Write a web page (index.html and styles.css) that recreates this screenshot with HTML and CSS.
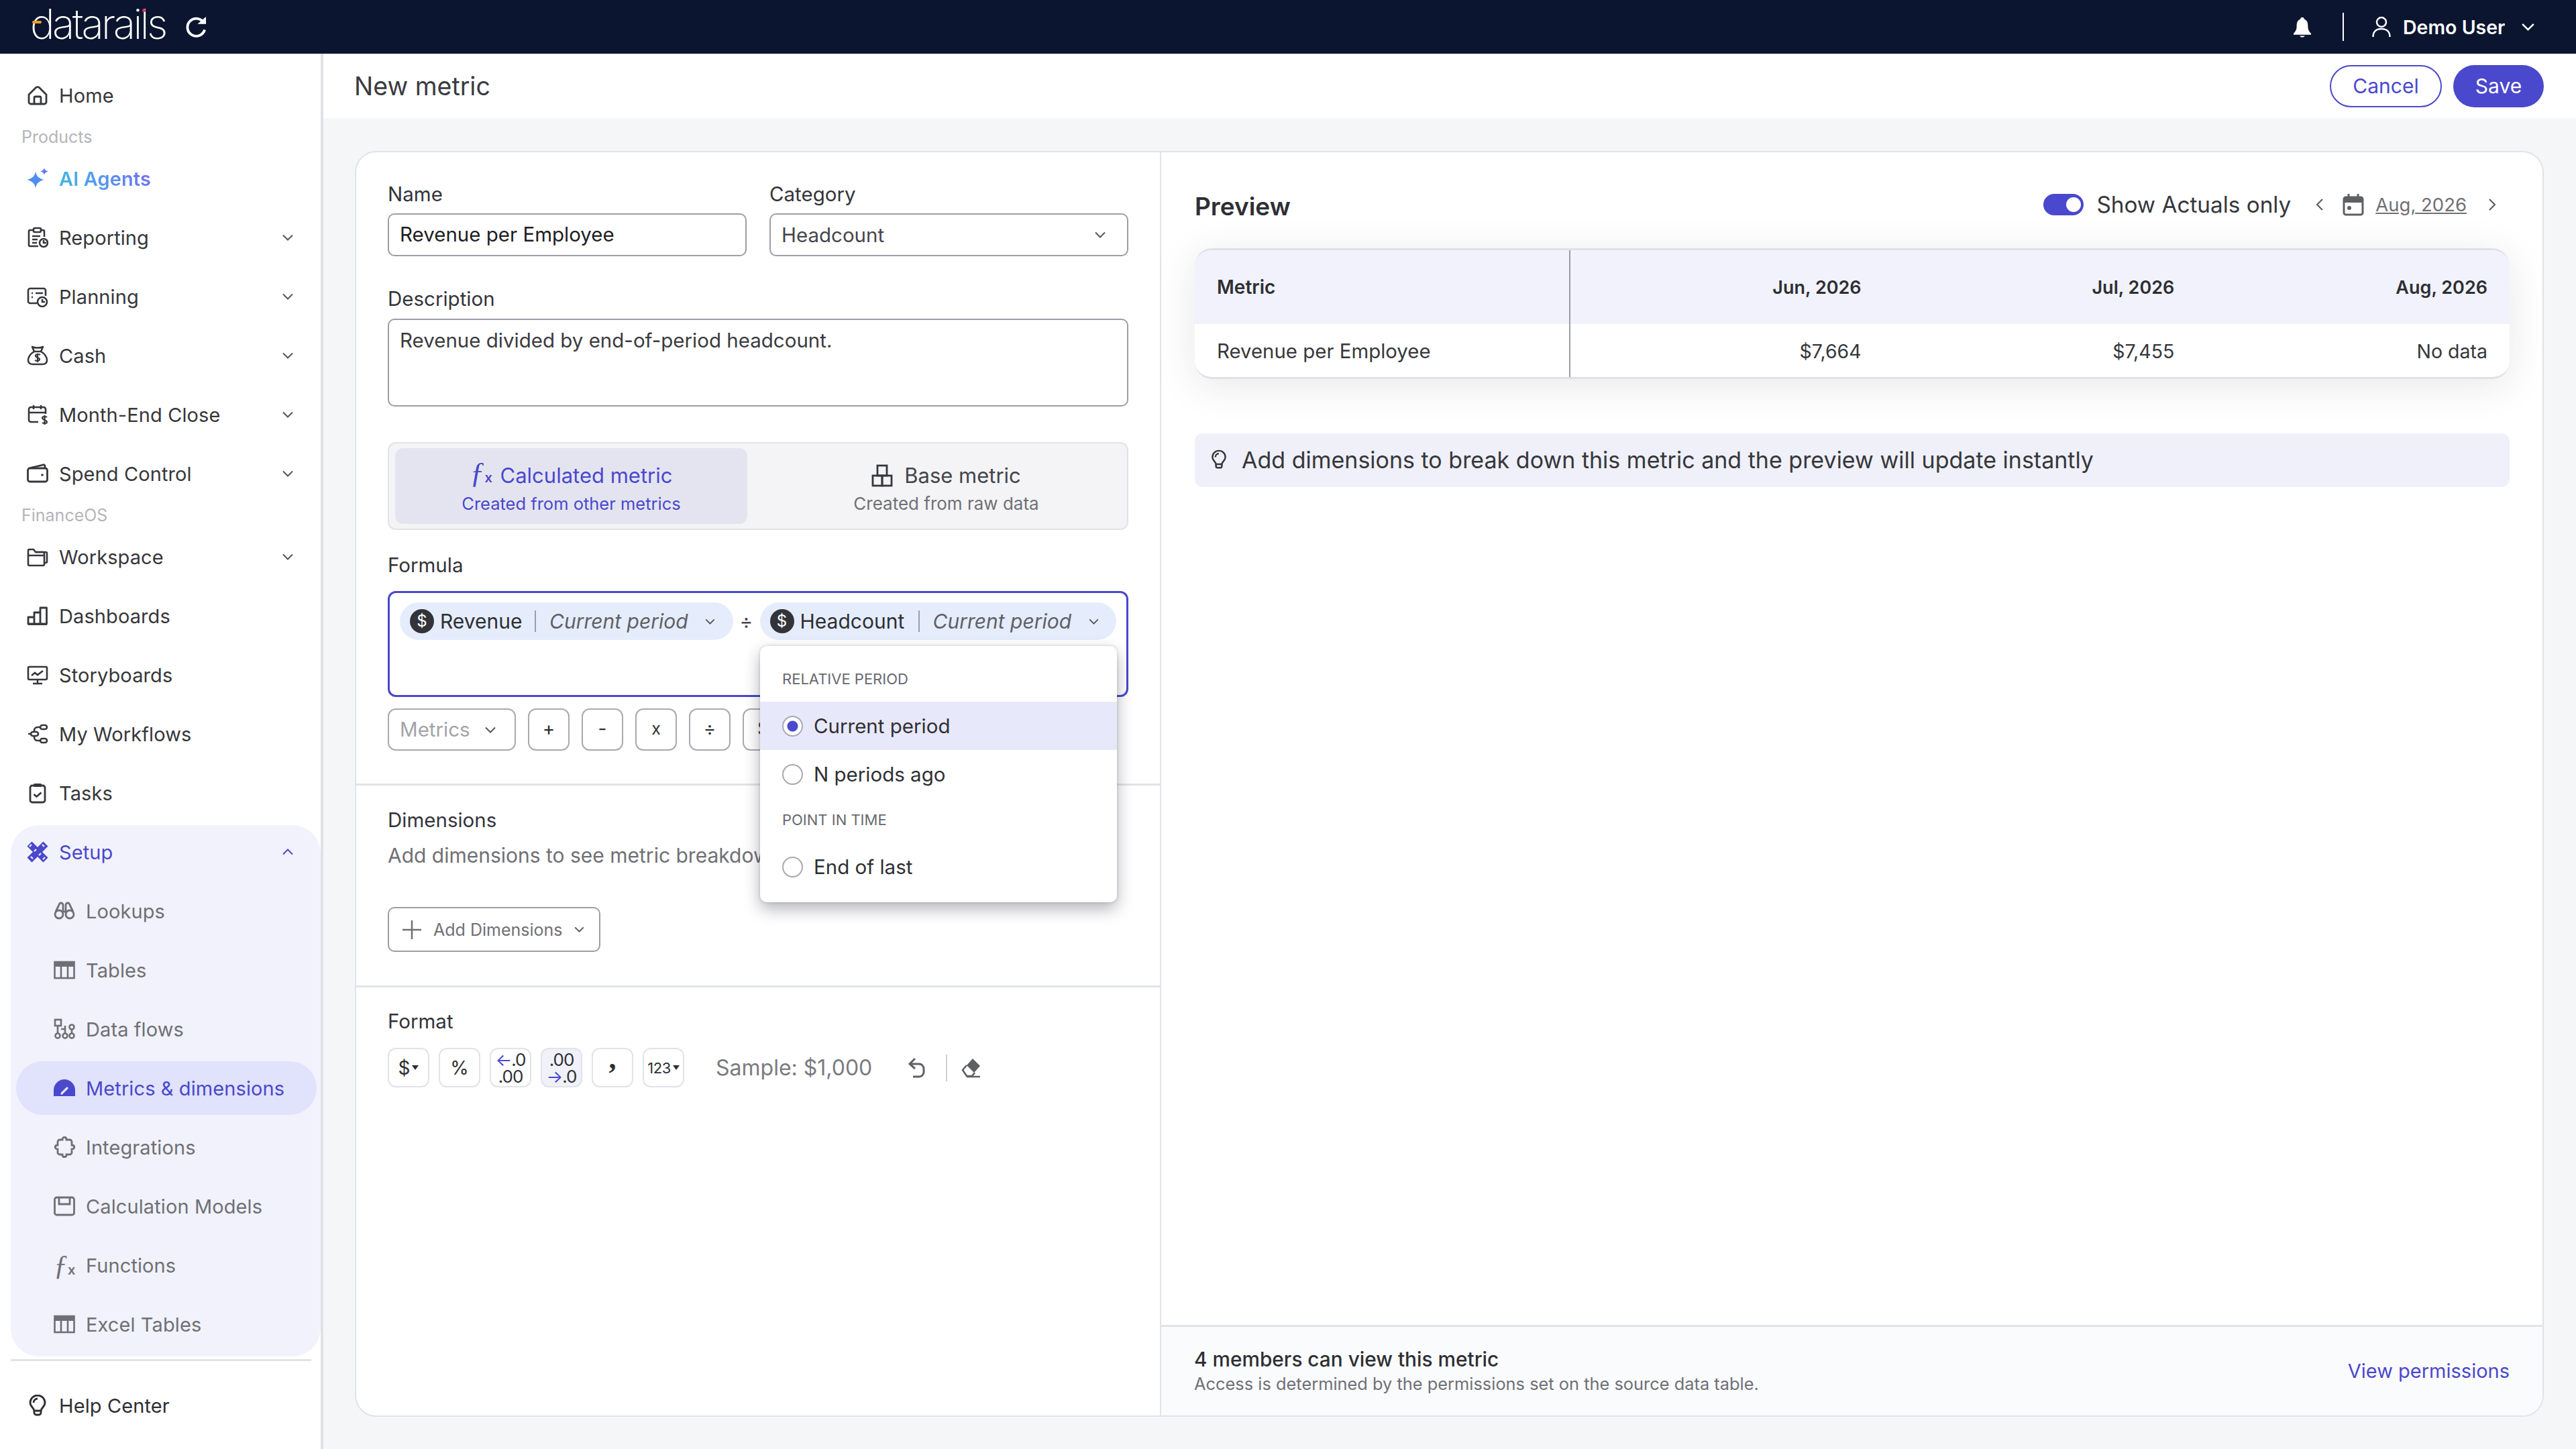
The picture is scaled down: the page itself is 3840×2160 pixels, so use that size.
FILE: index.html
```html
<!DOCTYPE html>
<html lang="en">
<head>
<meta charset="utf-8">
<title>New metric</title>
<link rel="stylesheet" href="styles.css">
</head>
<body>
<svg class="sprite" xmlns="http://www.w3.org/2000/svg">
  <defs>
    <symbol id="chev" viewBox="0 0 16 10"><path d="M1 1.5 8 8.5 15 1.5" fill="none" stroke="currentColor" stroke-width="2"/></symbol>
    <symbol id="i-home" viewBox="0 0 32 32"><path d="M3 15 13 5a4 4 0 0 1 6 0l10 10v11a3 3 0 0 1-3 3H6a3 3 0 0 1-3-3ZM11 29V20a2 2 0 0 1 2-2h6a2 2 0 0 1 2 2v9" fill="none" stroke="currentColor" stroke-width="2.8" stroke-linejoin="round"/></symbol>
    <symbol id="i-report" viewBox="0 0 32 32"><g fill="none" stroke="currentColor" stroke-width="2.6"><path d="M10 5H5a2 2 0 0 0-2 2v20a2 2 0 0 0 2 2h12M21 5h3a2 2 0 0 1 2 2v8"/><rect x="10" y="2" width="11" height="6" rx="2"/><path d="M8 14h12M8 19h8M8 24h7"/><circle cx="25" cy="24" r="6"/><path d="M25 20v4h4"/></g></symbol>
    <symbol id="i-plan" viewBox="0 0 32 32"><g fill="none" stroke="currentColor" stroke-width="2.6"><path d="M15 26H5a3 3 0 0 1-3-3V7a3 3 0 0 1 3-3h20a3 3 0 0 1 3 3v8"/><path d="M7 11h2M13 11h11M7 17h2"/><circle cx="23" cy="24" r="7"/><path d="M23 20v4h4"/></g></symbol>
    <symbol id="i-cash" viewBox="0 0 32 32"><g fill="none" stroke="currentColor" stroke-width="2.6" stroke-linejoin="round"><path d="M11 10 8 3c4 2 12 2 16 0l-3 7"/><path d="M11 10h10c5 3 9 8 9 13 0 4-3 6-7 6H9c-4 0-7-2-7-6 0-5 4-10 9-13Z"/><path d="M20 15c-1-1-6-2-7 1s7 3 6 6-5 2-7 1M16 13v13" stroke-width="2.2"/></g></symbol>
    <symbol id="i-month" viewBox="0 0 32 32"><g fill="none" stroke="currentColor" stroke-width="2.6"><path d="M17 27H6a3 3 0 0 1-3-3V8a3 3 0 0 1 3-3h19a3 3 0 0 1 3 3v7M3 13h25M10 2v6M21 2v6"/><path d="M30 20c-1-1-7-2-7 1s7 3 7 6-6 2-7 1M26.5 17v14" stroke-width="2.2"/></g></symbol>
    <symbol id="i-wallet" viewBox="0 0 32 32"><g fill="none" stroke="currentColor" stroke-width="2.8"><rect x="1.5" y="8" width="29" height="20" rx="3"/><path d="M3 8 24 3a2 2 0 0 1 3 2v3"/></g><circle cx="23" cy="18" r="1.8" fill="currentColor"/></symbol>
    <symbol id="i-folder" viewBox="0 0 32 32"><g fill="none" stroke="currentColor" stroke-width="2.6" stroke-linejoin="round"><path d="M2 27V7a2 2 0 0 1 2-2h6l3 4h11a2 2 0 0 1 2 2v16a2 2 0 0 1-2 2H4a2 2 0 0 1-2-2Z"/><path d="M13 9h15a2 2 0 0 1 2 2v12a2 2 0 0 1-2 2h-2M26 14H2"/></g></symbol>
    <symbol id="i-bars" viewBox="0 0 32 32"><g fill="none" stroke="currentColor" stroke-width="2.8" stroke-linejoin="round"><path d="M2 28V18h9v10ZM11 28V11h9v17ZM20 28V4h9.5v24Z"/><path d="M2 28.5h28"/></g></symbol>
    <symbol id="i-screen" viewBox="0 0 32 32"><g fill="none" stroke="currentColor" stroke-width="2.6"><rect x="2" y="4" width="28" height="19" rx="2"/><path d="M16 23v6M9 29h14"/><path d="m7 17 5-4 4 3 8-6"/></g></symbol>
    <symbol id="i-flow" viewBox="0 0 32 32"><g fill="none" stroke="currentColor" stroke-width="2.6"><rect x="20" y="3" width="10" height="6" rx="3"/><rect x="20" y="23" width="10" height="6" rx="3"/><rect x="6" y="13" width="11" height="6" rx="3"/><path d="M20 6h-4a5 5 0 0 0-5 5v2M11 19v2a5 5 0 0 0 5 5h4M6 16H2"/></g></symbol>
    <symbol id="i-task" viewBox="0 0 32 32"><g fill="none" stroke="currentColor" stroke-width="2.8"><rect x="5" y="5" width="22" height="25" rx="3"/><path d="m10.5 18 4 3.5 7-6"/></g><rect x="10" y="2" width="12" height="5" rx="1.5" fill="currentColor"/></symbol>
    <symbol id="i-setup" viewBox="0 0 32 32"><g stroke="currentColor" stroke-width="10" fill="none"><path d="M4 4 28 28"/><path d="M4 28 28 4"/></g><g stroke="#f1f2fb" stroke-width="2.2" fill="none"><path d="m4 8 3-3M11 15l3-3M18 21l3-3M24 27l3-3M6 23l3 3M23 5l3 3"/></g></symbol>
    <symbol id="i-binoc" viewBox="0 0 32 32"><g fill="none" stroke="currentColor" stroke-width="2.8"><circle cx="8" cy="21" r="6"/><circle cx="24" cy="21" r="6"/><path d="M3 17 8 7a3 3 0 0 1 6 0v10M29 17 24 7a3 3 0 0 0-6 0v10M14 17h4"/></g></symbol>
    <symbol id="i-table" viewBox="0 0 32 32"><g fill="none" stroke="currentColor" stroke-width="2.6"><rect x="1.5" y="4" width="29" height="24"/><path d="M11 11v17M21 11v17"/></g><rect x="1.5" y="4" width="29" height="7" fill="currentColor"/></symbol>
    <symbol id="i-dflow" viewBox="0 0 32 32"><g fill="none" stroke="currentColor" stroke-width="2.6"><rect x="2" y="2" width="9" height="9"/><circle cx="6" cy="26" r="3.5"/><circle cx="17" cy="26" r="3.5"/><circle cx="27" cy="26" r="3.5"/><circle cx="27" cy="13" r="3.5"/><path d="M6 11v11M17 11v11M11 16h6M27 17v5"/></g></symbol>
    <symbol id="i-gauge" viewBox="0 0 32 32"><path d="M0 28V19A16 16 0 0 1 32 19v9Z" fill="currentColor"/><path d="m12 24 8-8" stroke="#e1e2fb" stroke-width="3.2" stroke-linecap="round"/></symbol>
    <symbol id="i-puzzle" viewBox="0 0 32 32"><path d="M9 5h4c0-5 6-5 6 0h5a3 3 0 0 1 3 3v5c5 0 5 6 0 6v5a3 3 0 0 1-3 3h-5c0 5-6 5-6 0H9a3 3 0 0 1-3-3v-5c-5 0-5-6 0-6V8a3 3 0 0 1 3-3Z" fill="none" stroke="currentColor" stroke-width="2.8"/></symbol>
    <symbol id="i-save" viewBox="0 0 32 32"><g fill="none" stroke="currentColor" stroke-width="2.8"><rect x="1.5" y="3" width="29" height="26" rx="3"/><path d="M8 3v10h16V3"/></g></symbol>
    <symbol id="i-bulb" viewBox="0 0 32 32"><g fill="none" stroke="currentColor" stroke-width="2.8"><path d="M11 24c0-4-6-6-6-12a11 11 0 0 1 22 0c0 6-6 8-6 12Z"/><path d="M11 24v3a3 3 0 0 0 3 3h4a3 3 0 0 0 3-3v-3M10 12a6 6 0 0 1 6-6"/></g></symbol>
    <symbol id="i-base" viewBox="0 0 32 34"><g fill="none" stroke="currentColor" stroke-width="2.8"><rect x="9" y="2" width="14" height="15"/><rect x="2" y="17" width="14" height="15"/><rect x="16" y="17" width="14" height="15"/></g></symbol>
  </defs>
</svg>

<div class="app">
  <header class="topbar">
    <div class="logo">
      <span class="logo-word">datarails</span>
      <i class="logo-arc"></i><i class="logo-dot"></i>
      <svg class="logo-sync" viewBox="0 0 32 32"><path d="M28 10A13.5 13.5 0 1 0 29 20" fill="none" stroke="#fff" stroke-width="4"/><path d="M18 11h13V0Z" fill="#fff"/></svg>
    </div>
    <div class="top-right">
      <svg class="bell" viewBox="0 0 28 34"><path d="M14 1c2 0 3 1 3 3 5 2 6 6 6 11 0 6 2 9 5 12v2H0v-2c3-3 5-6 5-12 0-5 1-9 6-11 0-2 1-3 3-3ZM10 31h8c-1 3-7 3-8 0Z" fill="#fff"/></svg>
      <span class="top-sep"></span>
      <svg class="user" viewBox="0 0 28 32"><circle cx="14" cy="9" r="7" fill="none" stroke="#fff" stroke-width="2.5"/><path d="M1.5 31c0-8 5-12 12.5-12s12.5 4 12.5 12" fill="none" stroke="#fff" stroke-width="2.5"/></svg>
      <span class="user-name">Demo User</span>
      <svg class="chev top-chev"><use href="#chev"/></svg>
    </div>
  </header>

  <nav class="sidebar">
    <a class="nav"><svg class="ic"><use href="#i-home"/></svg><span>Home</span></a>
    <div class="nav-label">Products</div>
    <a class="nav ai"><svg class="ic" viewBox="0 0 32 32"><path d="M13 5C14 12 17 16 26 18 17 20 14 24 13 31 12 24 9 20 0 18 9 16 12 12 13 5Z" fill="#4f8df0"/><path d="M26 0c.5 3 2 4.500 6 5.500-4 1-5.500 2.500-6 5.500-.5-3-2-4.500-6-5.500 4-1 5.500-2.500 6-5.500Z" fill="#5f7af2"/></svg><span class="ai-text">AI Agents</span></a>
    <a class="nav"><svg class="ic"><use href="#i-report"/></svg><span>Reporting</span><svg class="chev"><use href="#chev"/></svg></a>
    <a class="nav"><svg class="ic"><use href="#i-plan"/></svg><span>Planning</span><svg class="chev"><use href="#chev"/></svg></a>
    <a class="nav"><svg class="ic"><use href="#i-cash"/></svg><span>Cash</span><svg class="chev"><use href="#chev"/></svg></a>
    <a class="nav"><svg class="ic"><use href="#i-month"/></svg><span>Month-End Close</span><svg class="chev"><use href="#chev"/></svg></a>
    <a class="nav"><svg class="ic"><use href="#i-wallet"/></svg><span>Spend Control</span><svg class="chev"><use href="#chev"/></svg></a>
    <div class="nav-label">FinanceOS</div>
    <a class="nav"><svg class="ic"><use href="#i-folder"/></svg><span>Workspace</span><svg class="chev"><use href="#chev"/></svg></a>
    <a class="nav"><svg class="ic"><use href="#i-bars"/></svg><span>Dashboards</span></a>
    <a class="nav"><svg class="ic"><use href="#i-screen"/></svg><span>Storyboards</span></a>
    <a class="nav"><svg class="ic"><use href="#i-flow"/></svg><span>My Workflows</span></a>
    <a class="nav"><svg class="ic"><use href="#i-task"/></svg><span>Tasks</span></a>
    <div class="setup">
      <a class="nav setup-head"><svg class="ic"><use href="#i-setup"/></svg><span>Setup</span><svg class="chev up"><use href="#chev"/></svg></a>
      <a class="nav sub"><svg class="ic"><use href="#i-binoc"/></svg><span>Lookups</span></a>
      <a class="nav sub"><svg class="ic"><use href="#i-table"/></svg><span>Tables</span></a>
      <a class="nav sub"><svg class="ic"><use href="#i-dflow"/></svg><span>Data flows</span></a>
      <a class="nav sub active"><svg class="ic"><use href="#i-gauge"/></svg><span>Metrics &amp; dimensions</span></a>
      <a class="nav sub"><svg class="ic"><use href="#i-puzzle"/></svg><span>Integrations</span></a>
      <a class="nav sub"><svg class="ic"><use href="#i-save"/></svg><span>Calculation Models</span></a>
      <a class="nav sub"><span class="ic fx">ƒ<small>x</small></span><span>Functions</span></a>
      <a class="nav sub"><svg class="ic"><use href="#i-table"/></svg><span>Excel Tables</span></a>
    </div>
    <div class="nav-rule"></div>
    <a class="nav help"><svg class="ic"><use href="#i-bulb"/></svg><span>Help Center</span></a>
  </nav>

  <main class="main">
    <div class="page-head">
      <h1>New metric</h1>
      <div class="head-actions">
        <button class="btn ghost">Cancel</button>
        <button class="btn solid">Save</button>
      </div>
    </div>
    <div class="content">
      <div class="card">
        <section class="left">
          <div class="sec sec-def">
            <div class="two">
              <div><label class="lbl">Name</label><div class="field strong">Revenue per Employee</div></div>
              <div><label class="lbl">Category</label><div class="field select">Headcount<svg class="chev"><use href="#chev"/></svg></div></div>
            </div>
            <label class="lbl desc-lbl">Description</label>
            <div class="field area">Revenue divided by end-of-period headcount.</div>
            <div class="seg">
              <div class="seg-opt on">
                <div class="seg-title"><span class="fx seg-fx">ƒ<small>x</small></span>Calculated metric</div>
                <div class="seg-sub">Created from other metrics</div>
              </div>
              <div class="seg-opt base">
                <div class="seg-title"><svg class="seg-ic"><use href="#i-base"/></svg>Base metric</div>
                <div class="seg-sub">Created from raw data</div>
              </div>
            </div>
            <label class="lbl formula-lbl">Formula</label>
            <div class="formula">
              <div class="chip c1"><b class="coin">$</b><span class="chip-name">Revenue</span><i class="chip-sep"></i><em>Current period</em><svg class="chev"><use href="#chev"/></svg></div>
              <span class="op">÷</span>
              <div class="chip c2"><b class="coin">$</b><span class="chip-name">Headcount</span><i class="chip-sep"></i><em>Current period</em><svg class="chev"><use href="#chev"/></svg></div>
              <div class="pop">
                <div class="pop-head first">RELATIVE PERIOD</div>
                <div class="pop-row sel"><i class="radio on"></i>Current period</div>
                <div class="pop-row"><i class="radio"></i>N periods ago</div>
                <div class="pop-head">POINT IN TIME</div>
                <div class="pop-row last"><i class="radio"></i>End of last</div>
              </div>
            </div>
            <div class="tools">
              <div class="tool metrics">Metrics<svg class="chev"><use href="#chev"/></svg></div>
              <div class="tool">+</div>
              <div class="tool">-</div>
              <div class="tool tool-x">x</div>
              <div class="tool">÷</div>
              <div class="tool">$</div>
            </div>
          </div>
          <div class="sec sec-dim">
            <label class="lbl">Dimensions</label>
            <p class="dim-text">Add dimensions to see metric breakdowns</p>
            <div class="add-dim"><svg class="plus" viewBox="0 0 28 28"><path d="M14 0v28M0 14h28" stroke="currentColor" stroke-width="2.5"/></svg>Add Dimensions<svg class="chev"><use href="#chev"/></svg></div>
          </div>
          <div class="sec sec-fmt">
            <label class="lbl">Format</label>
            <div class="fmt-row">
              <div class="fb fb-big">$<i class="tri"></i></div>
              <div class="fb fb-big">%</div>
              <div class="fb stack"><span><u>←</u>.0</span><span>.00</span></div>
              <div class="fb stack lit"><span>.00</span><span><u>→</u>.0</span></div>
              <div class="fb comma">,</div>
              <div class="fb num">123<i class="tri"></i></div>
              <span class="sample">Sample: $1,000</span>
              <svg class="undo" viewBox="0 0 26 32"><path d="M11 2 3 10l8 7M3 10h14a7 7 0 0 1 7 7v5a7 7 0 0 1-7 7H8" fill="none" stroke="#5f6064" stroke-width="3"/></svg>
              <span class="fmt-sep"></span>
              <svg class="eraser" viewBox="0 0 30 32"><path d="M17 2 28 13 19 23 8 12Z" fill="#5f6064"/><path d="M8 12 2 19l6 9h8l4-5M8 29h20" fill="none" stroke="#5f6064" stroke-width="2.6"/></svg>
            </div>
          </div>
        </section>

        <section class="right">
          <div class="prev-head">
            <h2>Preview</h2>
            <div class="prev-ctrl">
              <span class="toggle"><i></i></span>
              <span class="show">Show Actuals only</span>
              <svg class="arrow" viewBox="0 0 12 20"><path d="M10 2 2 10l8 8" fill="none" stroke="#55565b" stroke-width="2"/></svg>
              <svg class="cal" viewBox="0 0 32 34"><rect x="2" y="6" width="28" height="26" rx="3" fill="none" stroke="#5f6064" stroke-width="3"/><path d="M2 6h28v8H2Z" fill="#5f6064"/><path d="M9 1v7M23 1v7" stroke="#5f6064" stroke-width="3"/><circle cx="10" cy="22" r="3" fill="#5f6064"/></svg>
              <span class="date">Aug, 2026</span>
              <svg class="arrow" viewBox="0 0 12 20"><path d="m2 2 8 8-8 8" fill="none" stroke="#55565b" stroke-width="2"/></svg>
            </div>
          </div>
          <div class="tbl-wrap">
            <table class="tbl">
              <thead><tr><th class="c-name">Metric</th><th>Jun, 2026</th><th>Jul, 2026</th><th>Aug, 2026</th></tr></thead>
              <tbody><tr><td class="c-name">Revenue per Employee</td><td>$7,664</td><td>$7,455</td><td>No data</td></tr></tbody>
            </table>
          </div>
          <div class="hint"><svg class="hint-ic"><use href="#i-bulb"/></svg>Add dimensions to break down this metric and the preview will update instantly</div>
          <div class="foot">
            <div>
              <div class="foot-title">4 members can view this metric</div>
              <div class="foot-sub">Access is determined by the permissions set on the source data table.</div>
            </div>
            <a class="foot-link">View permissions</a>
          </div>
        </section>
      </div>
    </div>
  </main>
</div>
</body>
</html>
```

FILE: styles.css
```css
* { box-sizing: border-box; }
html, body { margin: 0; padding: 0; }
body {
  width: 3840px; height: 2160px; overflow: hidden;
  font-family: "Inter", "Liberation Sans", sans-serif;
  color: #2e2f33; background: #f5f6f8;
}
.sprite { display: none; }
svg { display: block; flex: none; }
h1, h2, p { margin: 0; font-weight: 400; }
.chev { width: 16px; height: 10px; color: #55565b; }

.app { display: grid; grid-template-columns: 482px 1fr; grid-template-rows: 80px 2080px; height: 2160px; }

/* top bar */
.topbar { grid-column: 1 / 3; background: #0c152f; display: flex; justify-content: space-between; align-items: center; color: #fff; }
.logo { position: relative; display: flex; align-items: center; padding-left: 45px; height: 80px; }
.logo-word { font-family: "Inter", sans-serif; font-weight: 200; font-size: 62px; letter-spacing: -3.6px; line-height: 80px; width: 232px; position: relative; top: -4px; white-space: nowrap; }
.logo-arc { position: absolute; left: 48px; top: 31px; width: 14px; height: 4px; background: #f59a23; border-radius: 3px; }
.logo-dot { position: absolute; left: 212px; top: 13px; width: 5px; height: 5px; background: #e6266d; border-radius: 50%; }
.logo-sync { width: 31px; height: 31px; }
.top-right { display: flex; align-items: center; padding-right: 61px; }
.bell { width: 26px; height: 33px; }
.top-sep { width: 2px; height: 42px; background: #fff; margin: 0 42px 0 47px; }
.user { width: 28px; height: 32px; }
.user-name { font-weight: 600; font-size: 28.5px; margin: 0 22px 0 18px; width: 154px; white-space: nowrap; }
.top-chev { width: 21px; height: 12px; color: #fff; }

/* sidebar */
.sidebar { background: #fff; border-right: 4px solid #e0e1e6; padding-top: 18px; }
.nav { display: flex; align-items: center; height: 88px; padding: 0 41px 0 40px; font-size: 29px; color: #36373b; letter-spacing: .1px; }
.nav > span:not(.ic) { margin-left: 16px; white-space: nowrap; }
.nav .chev { margin-left: auto; }
.ic { width: 32px; height: 32px; flex: none; }
.nav-label { height: 36px; line-height: 36px; padding-left: 32px; font-size: 25px; color: #b4b5b9; }
.ai-text { font-weight: 600; background: linear-gradient(90deg, #42b6e6, #6f72f6); -webkit-background-clip: text; background-clip: text; color: transparent; }
.setup { margin-top: 4px; margin-left: 16px; background: #f1f2fb; border-radius: 42px; padding-bottom: 4px; }
.setup .nav { padding-left: 24px; padding-right: 41px; }
.setup-head.nav { height: 80px; margin-bottom: 4px; color: #4a48cc; }
.setup-head .chev { color: #4a48cc; }
.up { transform: rotate(180deg); }
.setup .nav.sub { color: #6f7075; padding-left: 64px; }
.setup .nav.active { height: 80px; margin: 4px 6px 4px 8px; padding-left: 56px; border-radius: 40px; background: #e1e2fb; color: #4a48cc; }
.fx { font-family: "Liberation Serif", serif; font-style: italic; font-size: 42px; line-height: 32px; text-align: center; letter-spacing: 0; }
.fx small { font-family: "Inter", sans-serif; font-style: normal; font-weight: 600; font-size: 20px; }
.nav-rule { height: 3px; margin: 4px 14px 0 16px; background: #e2e3e7; }
.help { margin-top: 22px; color: #2e2f33; }

/* page */
.main { display: flex; flex-direction: column; min-width: 0; }
.page-head { height: 96px; flex: none; background: #fff; display: flex; align-items: center; justify-content: space-between; padding: 0 48px 0 46px; }
h1 { font-size: 37.5px; color: #3a3b40; }
.head-actions { display: flex; gap: 17px; }
.btn { height: 63px; border-radius: 32px; font: 400 30px "Inter", sans-serif; padding: 0; }
.ghost { width: 167px; background: #fff; border: 2.5px solid #4a48cc; color: #4a48cc; }
.solid { width: 135px; background: #4a48cc; border: 0; color: #fff; }
.content { flex: 1; padding: 49px 48px 48px 47px; }
.card { height: 1887px; display: flex; background: #fff; border: 2px solid #e2e3e8; border-radius: 32px; }

/* left form */
.left { width: 1200px; flex: none; border-right: 2px solid #e2e3e8; }
.sec { padding: 0 47px 0 47px; }
.sec-def { padding-top: 44px; padding-bottom: 49px; border-bottom: 3px solid #e2e3e7; }
.lbl { display: block; height: 36px; line-height: 36px; font-size: 29.5px; color: #33343a; }
.two { display: grid; grid-template-columns: 535px 535px; gap: 34px; }
.two .lbl { margin-bottom: 11px; }
.field { border: 2.5px solid #9c9da8; border-radius: 10px; height: 64px; line-height: 59px; padding: 0 16px; font-size: 29.5px; color: #45464b; white-space: nowrap; }
.field.strong { color: #1d1e22; }
.select { display: flex; align-items: center; justify-content: space-between; padding-right: 32px; }
.desc-lbl { margin-top: 45px; margin-bottom: 12px; }
.area { height: 131px; line-height: 32px; padding-top: 14px; color: #3a3b40; }
.seg { margin-top: 53px; height: 131px; display: flex; background: #f4f4f6; border: 2.5px solid #e2e3e7; border-radius: 12px; padding: 7px 9px; }
.seg-opt { flex: 1; display: flex; flex-direction: column; align-items: center; justify-content: center; border-radius: 12px; color: #44454a; padding-top: 5px; }
.seg-opt.base { padding-left: 36px; }
.seg-opt.on { background: #e4e4f0; color: #4a48cc; flex: 0 0 525px; }
.seg-title { display: flex; align-items: center; font-size: 31px; height: 40px; white-space: nowrap; }
.seg-sub { font-size: 25.5px; margin-top: 6px; color: #6f7075; white-space: nowrap; }
.base .seg-sub { font-size: 26px; }
.on .seg-sub { color: #4a48cc; }
.seg-fx { margin-right: 17px; width: 28px; font-size: 44px; }
.seg-ic { width: 32px; height: 34px; margin-right: 17px; color: #36373b; }
.formula-lbl { margin-top: 34px; margin-bottom: 21px; }
.formula { position: relative; height: 158px; border: 3px solid #4a48cc; border-radius: 12px; padding: 14px 15px; display: flex; align-items: flex-start; }
.chip { height: 56px; border-radius: 28px; background: #e5edfc; display: flex; align-items: center; font-size: 30px; padding-left: 15px; color: #2e2f33; }
.c1 { width: 497px; }
.c2 { width: 532px; }
.coin { width: 36px; height: 36px; border-radius: 50%; background: #33343a; color: #fff; font-size: 24px; font-weight: 400; text-align: center; line-height: 36px; flex: none; }
.chip-name { margin-left: 9px; white-space: nowrap; }
.c1 .chip-name { width: 122px; }
.c2 .chip-name { width: 157px; }
.chip-sep { width: 2px; height: 32px; background: #9c9da8; margin: 0 20px 0 19px; flex: none; }
.chip em { width: 208px; color: #5f6066; white-space: nowrap; }
.chip .chev { width: 15px; height: 9px; margin-left: 24px; }
.op { width: 40px; text-align: center; font-size: 30px; line-height: 56px; color: #45464b; }
.pop { position: absolute; left: 552px; top: 79px; width: 532px; height: 382px; background: #fff; border-radius: 10px; box-shadow: 0 10px 24px rgba(20,22,40,.32), 0 0 4px rgba(20,22,40,.18); z-index: 5; padding-top: 33px; }
.pop-head { height: 32px; line-height: 32px; padding-left: 33px; font-size: 22px; color: #68696f; }
.pop-head.first { margin-bottom: 18px; }
.pop-row { height: 72px; display: flex; align-items: center; padding-left: 33px; font-size: 29.5px; color: #2e2f33; }
.pop-row.sel { background: #e8e8fb; }
.pop-row + .pop-head { margin-top: 16px; margin-bottom: 18px; }
.radio { width: 31px; height: 31px; border-radius: 50%; border: 2.5px solid #a8a9b2; margin-right: 16px; background: #fff; flex: none; }
.radio.on { background: radial-gradient(circle, #4a48cc 0 7.5px, #fff 8.5px); }
.tools { margin-top: 17px; display: flex; gap: 18px; }
.tool { width: 62px; height: 63px; border: 2.5px solid #a8a9b2; border-radius: 12px; text-align: center; line-height: 57px; font-size: 28px; color: #2e2f33; flex: none; }
.tool-x { font-size: 25px; }
.metrics { width: 191px; display: flex; align-items: center; justify-content: space-between; padding: 0 28px 0 16px; font-size: 29.5px; color: #a2a3a9; }
.sec-dim { padding-top: 33px; padding-bottom: 50px; border-bottom: 3px solid #e2e3e7; }
.dim-text { margin-top: 15px; height: 40px; line-height: 40px; font-size: 30px; color: #6f7075; white-space: nowrap; overflow: hidden; }
.add-dim { margin-top: 57px; width: 317px; height: 67px; border: 2.5px solid #9c9da8; border-radius: 10px; display: flex; align-items: center; padding-left: 20px; font-size: 25px; color: #6f7075; white-space: nowrap; }
.plus { width: 28px; height: 28px; margin-right: 18px; }
.add-dim .chev { width: 15px; height: 9px; margin-left: 18px; }
.sec-fmt { padding-top: 32px; }
.fmt-row { margin-top: 22px; display: flex; align-items: center; gap: 14px; }
.fb { width: 62px; height: 59px; border: 2.5px solid #e2e3e7; border-radius: 12px; display: flex; align-items: center; justify-content: center; font-size: 25px; color: #2e2f33; flex: none; }
.fb-big { font-size: 28px; }
.tri { width: 0; height: 0; border: 5px solid transparent; border-top: 7px solid #2e2f33; border-bottom: 0; margin-left: 3px; }
.stack { flex-direction: column; line-height: 25px; font-size: 26px; letter-spacing: -1px; }
.stack u { text-decoration: none; color: #4a48cc; }
.lit { background: #f0f1f9; }
.comma { font-family: "Liberation Serif", serif; font-weight: 700; font-size: 44px; line-height: 40px; padding-bottom: 26px; }
.num { font-size: 22px; letter-spacing: -.5px; }
.sample { margin-left: 33px; width: 272px; font-size: 32px; color: #7a7b80; white-space: nowrap; }
.undo { width: 26px; height: 32px; margin-right: 17px; }
.fmt-sep { width: 2px; height: 40px; background: #cfd0d5; margin-right: 7px; }
.eraser { width: 30px; height: 32px; }

/* right */
.right { flex: 1; display: flex; flex-direction: column; padding: 0; min-width: 0; overflow: hidden; border-radius: 0 30px 30px 0; }
.prev-head { margin: 50px 49px 0 50px; height: 60px; display: flex; align-items: center; justify-content: space-between; }
h2 { font-size: 37px; font-weight: 600; color: #2e2f33; }
.prev-ctrl { display: flex; align-items: center; position: relative; top: -2px; padding-right: 20px; }
.toggle { width: 60px; height: 32px; border-radius: 16px; background: #4a48cc; position: relative; }
.toggle i { position: absolute; right: 4px; top: 5px; width: 22px; height: 22px; border-radius: 50%; background: #fff; }
.show { margin: 0 37px 0 19px; font-size: 33.3px; color: #36373b; white-space: nowrap; }
.arrow { width: 12px; height: 20px; }
.cal { width: 32px; height: 34px; margin: 0 17px 0 28px; }
.date { font-size: 27.5px; color: #6f7075; text-decoration: underline; margin-right: 32px; white-space: nowrap; }
.tbl-wrap { margin: 33px 49px 0 50px; height: 195px; border-top: 3px solid #dfe0e8; border-bottom: 3px solid #dfe0e8; border-radius: 26px; overflow: hidden; box-shadow: 0 10px 60px rgba(30,30,50,.1); }
.tbl { width: 100%; border-collapse: separate; border-spacing: 0; table-layout: fixed; font-size: 28.5px; }
.tbl th { height: 110px; background: #f1f2fb; font-weight: 600; text-align: right; padding: 0 33px 0 0; font-size: 27px; color: #2e2f33; }
.tbl th.c-name { font-size: 28px; }
.tbl td { height: 79px; text-align: right; padding: 2px 33px 0 0; color: #36373b; }
.tbl .c-name { width: 560px; text-align: left; padding-left: 33px; border-right: 2px solid #9c9da8; }
.tbl td.c-name { font-size: 29.4px; }
.hint { margin: 81px 49px 0 50px; height: 80px; background: #eff0f9; border-radius: 12px; display: flex; align-items: center; padding: 0 0 2px 22px; font-size: 34px; color: #36373b; white-space: nowrap; }
.hint-ic { width: 28px; height: 32px; margin-right: 20px; }
.foot { margin-top: auto; height: 135px; border-top: 3px solid #e2e3e7; background: #fafbfd; display: flex; align-items: center; justify-content: space-between; padding: 0 49px 3px 49px; }
.foot-title { font-size: 29.8px; font-weight: 500; color: #2e2f33; }
.foot-sub { font-size: 25.4px; color: #6f7075; margin-top: 3px; }
.foot-link { font-size: 29px; color: #4a48cc; position: relative; top: 1px; }
```
